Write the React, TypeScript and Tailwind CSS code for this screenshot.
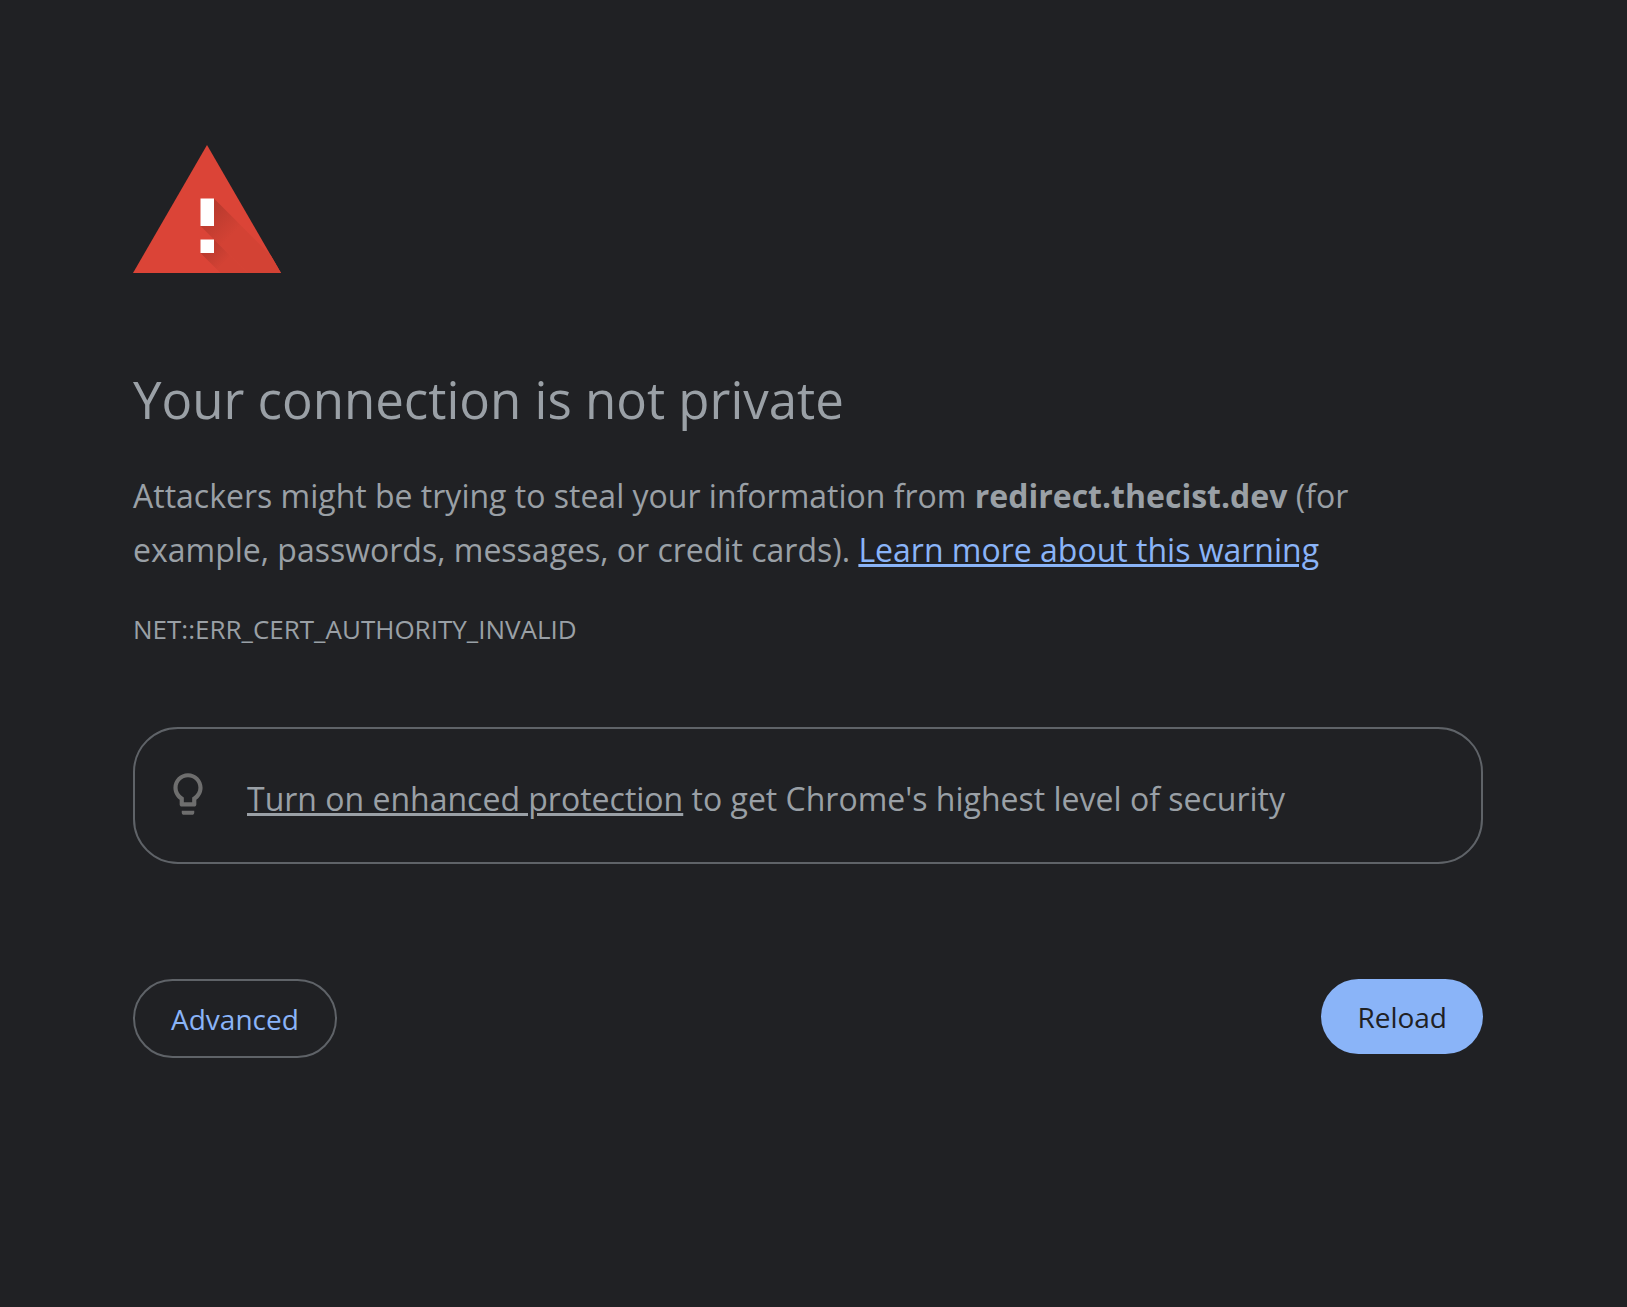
function WarningIcon() {
  return (
    <svg width="148" height="128" viewBox="0 0 148 128" role="img" aria-label="Warning">
      <defs>
        <linearGradient id="bar-shadow" gradientUnits="userSpaceOnUse" x1="74" y1="67" x2="98" y2="91">
          <stop offset="0" stopColor="#b83a2e" />
          <stop offset="1" stopColor="#d34234" />
        </linearGradient>
        <linearGradient id="dot-shadow" gradientUnits="userSpaceOnUse" x1="74" y1="101" x2="91" y2="118">
          <stop offset="0" stopColor="#b83a2e" />
          <stop offset="1" stopColor="#d34234" />
        </linearGradient>
        <clipPath id="triangle">
          <path d="M74 0L148 128H0z" />
        </clipPath>
      </defs>
      <g clipPath="url(#triangle)">
        <path fill="#db4437" d="M0 0h148v128H0z" />
        <path fill="url(#bar-shadow)" d="M81 53.5L155.5 128H114.5L67.5 81z" />
        <path fill="url(#dot-shadow)" d="M81 94.5L114.5 128H87.5L67.5 108z" />
        <path fill="#fff" d="M67.500 53.5H81V81H67.500zM67.500 94.500H81V108H67.500z" />
      </g>
    </svg>
  )
}

function LightbulbIcon() {
  return (
    <svg className="shrink-0" width="50" height="50" viewBox="0 0 24 24" fill="#6e6e6e" aria-hidden="true">
      <path d="M9 21c0 .55.45 1 1 1h4c.55 0 1-.45 1-1v-1H9v1zm3-19C8.14 2 5 5.14 5 9c0 2.38 1.19 4.47 3 5.74V17c0 .55.45 1 1 1h6c.55 0 1-.45 1-1v-2.26c1.81-1.27 3-3.36 3-5.74 0-3.86-3.14-7-7-7zm2.85 11.1l-.85.6V16h-4v-2.3l-.85-.6C7.8 12.16 7 10.63 7 9c0-2.76 2.24-5 5-5s5 2.24 5 5c0 1.63-.8 3.16-2.15 4.1z" />
    </svg>
  )
}

export default function App() {
  return (
    <div className="min-h-screen bg-[#202124] pr-[11px] font-['Open_Sans','Noto_Sans',sans-serif] text-[#9aa0a6]">
      <main className="mx-auto max-w-[1350px] pt-[145px] pb-16">
        <WarningIcon />

        <h1 className="mt-[90px] text-[51px] leading-[72px]">Your connection is not private</h1>

        <p className="mt-[34px] text-[32px] leading-[54px]">
          Attackers might be trying to steal your information from{' '}
          <strong className="font-bold">redirect.thecist.dev</strong> (for example, passwords, messages, or
          credit cards).{' '}
          <a href="#learn-more" className="text-[#8ab4f8] underline">
            Learn more about this warning
          </a>
        </p>

        <p className="mt-[32px] text-[26px] leading-[40px]">NET::ERR_CERT_AUTHORITY_INVALID</p>

        <div className="mt-[78px] flex items-start gap-[34px] rounded-[45px] border-2 border-[#5f6368] px-[28px] pt-[40px] pb-[36px]">
          <LightbulbIcon />
          <p className="pt-[3px] text-[32px] leading-[54px]">
            <a href="#enhanced-protection" className="underline">
              Turn on enhanced protection
            </a>{' '}
            to get Chrome's highest level of security
          </p>
        </div>

        <div className="mt-[115px] flex items-start justify-between">
          <button
            type="button"
            className="rounded-full border-2 border-[#5f6368] px-[36px] pt-[19px] pb-[17px] text-[28px] leading-[39px] text-[#8ab4f8]"
          >
            Advanced
          </button>
          <button
            type="button"
            className="rounded-full bg-[#8ab4f8] px-[36px] pt-[19px] pb-[17px] text-[28px] leading-[39px] text-[#202124]"
          >
            Reload
          </button>
        </div>
      </main>
    </div>
  )
}
